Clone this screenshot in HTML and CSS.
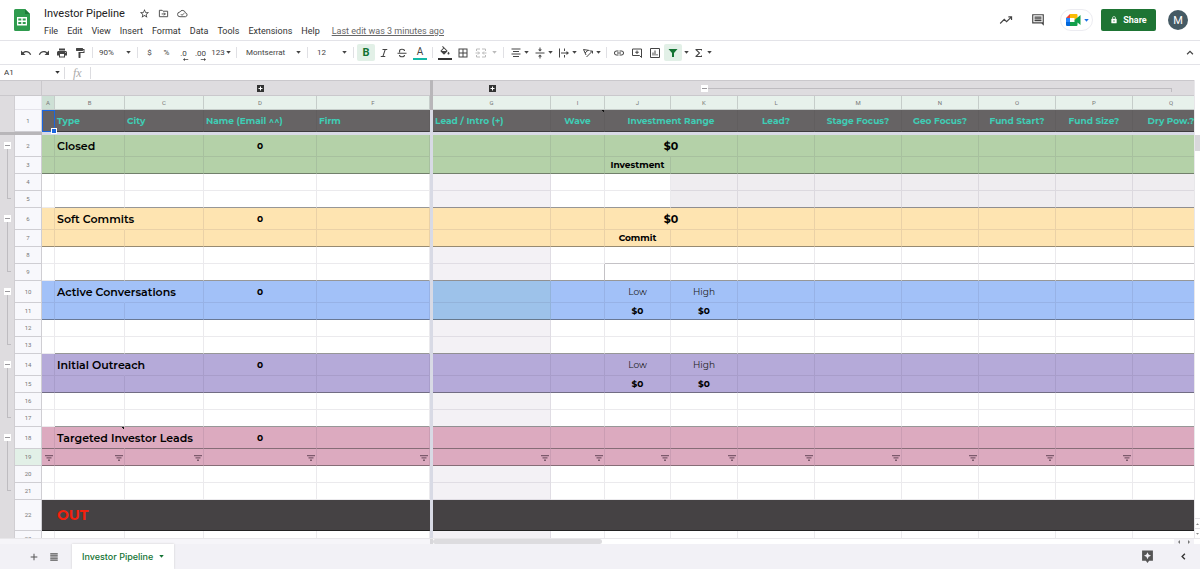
FILE: index.html
```
<!DOCTYPE html>
<html lang="en">
<head>
  <meta charset="UTF-8" />
  <meta name="viewport" content="width=device-width, initial-scale=1.0"/>
  <title>Investor Pipeline</title>
  <link rel="stylesheet" href="styles.css">
</head>
<body>
  <!-- shared icons -->
  <svg class="symbols" aria-hidden="true">
    <symbol id="caret" viewBox="0 0 6 4"><path d="M0 0h6L3 3.5z"/></symbol>
    <symbol id="filter" viewBox="0 0 8 6"><path d="M0 0h8v1.3H0zM1.5 2.3h5v1.3h-5zM3 4.6h2V6H3z"/></symbol>
    <symbol id="plus" viewBox="0 0 7 7"><path d="M0 0h7v7H0z"/><path d="M3.5 1.5v4M1.5 3.5h4" stroke="#fff" stroke-width="1"/></symbol>
    <symbol id="minus" viewBox="0 0 7 7"><path d="M1 3.5h5" stroke="#9a989c" stroke-width="1"/></symbol>
  </svg>

  <header class="topbar">
    <svg class="logo" viewBox="0 0 16 22">
      <path d="M1.5 0H11l5 5v15.5a1.5 1.5 0 0 1-1.5 1.5h-13A1.5 1.5 0 0 1 0 20.500V1.500A1.500 1.500 0 0 1 1.500 0z" fill="#2f9b4e"/>
      <path d="M11 0l5 5h-5z" fill="#1c7a38"/>
      <path d="M3 8h10v8.500H3z" fill="#fff"/>
      <path d="M4.300 9.500h3v2h-3zM8.700 9.500h3v2h-3zM4.300 13h3v2h-3zM8.700 13h3v2h-3z" fill="#2f9b4e"/>
    </svg>
    <div class="doc">
      <div class="title-row">
        <input class="doc-title" type="text" value="Investor Pipeline" aria-label="Document title">
        <button class="mini" aria-label="Star"><svg viewBox="0 0 24 24"><path d="M22 9.240l-7.190-.620L12 2 9.190 8.630 2 9.240l5.460 4.730L5.820 21 12 17.270 18.180 21l-1.630-7.030L22 9.240zM12 15.400l-3.760 2.270 1-4.280-3.320-2.880 4.380-.380L12 6.100l1.710 4.040 4.380.380-3.320 2.880 1 4.280L12 15.400z"/></svg></button>
        <button class="mini" aria-label="Move"><svg viewBox="0 0 24 24" fill="none" stroke="currentColor" stroke-width="2"><path d="M3 5h6l2 2h10v12H3zM8 13h8M13 10l3 3-3 3" /></svg></button>
        <button class="mini" aria-label="Saved to Drive"><svg viewBox="0 0 24 24" fill="none" stroke="currentColor" stroke-width="2"><path d="M6.500 19a5 5 0 0 1-.500-10 6.500 6.500 0 0 1 12.300 1.700A4.200 4.200 0 0 1 18.500 19zM8.500 13.500l2.500 2.500 4.500-4.500"/></svg></button>
      </div>
      <nav class="menu">
        <button>File</button>
        <button>Edit</button>
        <button>View</button>
        <button>Insert</button>
        <button>Format</button>
        <button>Data</button>
        <button>Tools</button>
        <button>Extensions</button>
        <button>Help</button>
        <a class="last-edit" href="#">Last edit was 3 minutes ago</a>
      </nav>
    </div>
    <div class="actions">
      <button class="action" aria-label="Activity"><svg viewBox="0 0 24 24" fill="none" stroke="currentColor" stroke-width="2"><path d="M2 18l7-7 4 4 8-8M16 6.500h5.500V12"/></svg></button>
      <button class="action" aria-label="Comments"><svg viewBox="0 0 24 24"><path d="M2 2h20v20l-4-4H2zm2 2v12h16V4zm2 2h12v2H6zm0 3h12v2H6zm0 3h12v2H6z" fill-rule="evenodd"/></svg></button>
      <button class="meet" aria-label="Meet">
        <svg class="meet-logo" viewBox="0 0 15 12">
          <path d="M0 4l4-4v4z" fill="#ea4335"/>
          <path d="M4 0h6.500a1 1 0 0 1 1 1v4L8.500 6.500V4H4z" fill="#fbbc04"/>
          <path d="M0 4h4v4H0z" fill="#2684fc"/>
          <path d="M0 8h4v4H1a1 1 0 0 1-1-1z" fill="#0066da"/>
          <path d="M4 8h4.500V6l6-5v10l-3-2.500V11a1 1 0 0 1-1 1H4z" fill="#12a04b"/>
        </svg>
        <svg class="caret"><use href="#caret"/></svg>
      </button>
      <button class="share">
        <svg viewBox="0 0 24 24"><path d="M18 8h-1V6c0-2.760-2.240-5-5-5S7 3.240 7 6v2H6c-1.100 0-2 .900-2 2v10c0 1.100.900 2 2 2h12c1.100 0 2-.900 2-2V10c0-1.100-.900-2-2-2zm-6 9c-1.100 0-2-.900-2-2s.900-2 2-2 2 .900 2 2-.900 2-2 2zm3.100-9H8.900V6c0-1.710 1.390-3.100 3.100-3.100 1.710 0 3.100 1.390 3.100 3.100v2z"/></svg>
        Share
      </button>
      <button class="avatar">M</button>
    </div>
  </header>

  <div class="toolbar">
    <button class="tool" aria-label="Undo"><svg viewBox="0 0 24 24"><path d="M12.500 8c-2.650 0-5.050.990-6.900 2.600L2 7v9h9l-3.620-3.620c1.390-1.160 3.160-1.880 5.120-1.880 3.540 0 6.550 2.310 7.600 5.500l2.370-.780C21.080 11.030 17.150 8 12.500 8z"/></svg></button>
    <button class="tool" aria-label="Redo"><svg viewBox="0 0 24 24"><path d="M18.400 10.600C16.550 8.990 14.150 8 11.500 8c-4.650 0-8.580 3.030-9.960 7.220L3.900 16c1.050-3.190 4.050-5.500 7.600-5.500 1.950 0 3.730.720 5.120 1.880L13 16h9V7l-3.600 3.600z"/></svg></button>
    <button class="tool" aria-label="Print"><svg viewBox="0 0 24 24"><path d="M19 8H5c-1.660 0-3 1.340-3 3v6h4v4h12v-4h4v-6c0-1.660-1.340-3-3-3zm-3 11H8v-5h8v5zm3-7c-.550 0-1-.450-1-1s.450-1 1-1 1 .450 1 1-.450 1-1 1zm-1-9H6v4h12V3z"/></svg></button>
    <button class="tool" aria-label="Paint format"><svg viewBox="0 0 24 24"><path d="M18 4V3c0-.550-.450-1-1-1H5c-.550 0-1 .450-1 1v4c0 .550.450 1 1 1h12c.550 0 1-.450 1-1V6h1v4H9v11c0 .550.450 1 1 1h2c.550 0 1-.450 1-1v-9h8V4h-3z"/></svg></button>
    <span class="sep"></span>
    <label class="drop zoom"><select aria-label="Zoom"><option>90%</option></select><svg class="caret"><use href="#caret"/></svg></label>
    <span class="sep"></span>
    <button class="tool num">$</button>
    <button class="tool num">%</button>
    <button class="tool num decimals">.0<svg viewBox="0 0 8 4"><path d="M0 2l2.500-2v1.500H7v1H2.500V4z"/></svg></button>
    <button class="tool num decimals">.00<svg viewBox="0 0 8 4"><path d="M8 2L5.500 0v1.500H1v1h4.500V4z"/></svg></button>
    <button class="tool formats">123<svg class="caret"><use href="#caret"/></svg></button>
    <span class="sep"></span>
    <label class="drop font"><select aria-label="Font"><option>Montserrat</option></select><svg class="caret"><use href="#caret"/></svg></label>
    <span class="sep"></span>
    <label class="drop size"><select aria-label="Font size"><option>12</option></select><svg class="caret"><use href="#caret"/></svg></label>
    <span class="sep"></span>
    <button class="tool bold on">B</button>
    <button class="tool" aria-label="Italic"><svg viewBox="0 0 24 24"><path d="M9 4v2.200h4l-4 11.600H5.500V20h9v-2.200h-3.300l4-11.600h3.300V4z"/></svg></button>
    <button class="tool" aria-label="Strikethrough"><svg viewBox="0 0 24 24" fill="none" stroke="currentColor" stroke-width="2.200"><path d="M3 12.500h18M17 8c0-2-2-3.500-5-3.500S7 6 7 8.300c0 1 .500 1.800 1.200 2.300M7 16c0 2 2 3.500 5 3.500s5-1.500 5-3.500"/></svg></button>
    <button class="tool text-color">A</button>
    <span class="sep"></span>
    <button class="tool fill" aria-label="Fill color"><svg viewBox="0 0 24 24"><path d="M16.560 8.940L7.620 0 6.210 1.410l2.380 2.380-5.150 5.150c-.590.590-.590 1.540 0 2.120l5.500 5.500c.290.290.680.440 1.060.440s.770-.150 1.060-.440l5.500-5.500c.590-.580.590-1.530 0-2.120zM5.210 10L10 5.210 14.790 10H5.210zM19 11.500s-2 2.170-2 3.500c0 1.100.900 2 2 2s2-.900 2-2c0-1.330-2-3.500-2-3.500z"/></svg></button>
    <button class="tool" aria-label="Borders"><svg viewBox="0 0 24 24"><path d="M3 3v18h18V3H3zm8 16H5v-6h6v6zm0-8H5V5h6v6zm8 8h-6v-6h6v6zm0-8h-6V5h6v6z"/></svg></button>
    <button class="tool merge" disabled aria-label="Merge cells"><svg viewBox="0 0 24 24" fill="none" stroke="currentColor" stroke-width="2"><path d="M3 8V4h7M14 4h7v4M3 16v4h7M14 20h7v-4M1 12h8M6 9l3 3-3 3M23 12h-8M18 9l-3 3 3 3"/></svg><svg class="caret"><use href="#caret"/></svg></button>
    <span class="sep"></span>
    <button class="tool pick" aria-label="Horizontal align"><svg viewBox="0 0 24 24"><path d="M3 3h18v2H3zM6 8h12v2H6zM3 13h18v2H3zM6 18h12v2H6z"/></svg><svg class="caret"><use href="#caret"/></svg></button>
    <button class="tool pick" aria-label="Vertical align"><svg viewBox="0 0 24 24"><path d="M3 11h18v2H3zM11 1h2v4h3l-4 4-4-4h3zM11 23h2v-4h3l-4-4-4 4h3z"/></svg><svg class="caret"><use href="#caret"/></svg></button>
    <button class="tool pick" aria-label="Text wrapping"><svg viewBox="0 0 24 24"><path d="M2 3h2v18H2zM12 3h2v5h-2zM12 16h2v5h-2zM6 11h11V8l5 4-5 4v-3H6z"/></svg><svg class="caret"><use href="#caret"/></svg></button>
    <button class="tool pick" aria-label="Text rotation"><svg viewBox="0 0 24 24" fill="none" stroke="currentColor" stroke-width="2"><path d="M3 5l12 2M3 5l5 11M12 6.500L6 12M9 20L21 8M21 13V8h-5"/></svg><svg class="caret"><use href="#caret"/></svg></button>
    <span class="sep"></span>
    <button class="tool" aria-label="Insert link"><svg viewBox="0 0 24 24"><path d="M3.900 12c0-1.710 1.390-3.100 3.100-3.100h4V7H7c-2.760 0-5 2.240-5 5s2.240 5 5 5h4v-1.900H7c-1.710 0-3.100-1.390-3.100-3.100zM8 13h8v-2H8v2zm9-6h-4v1.900h4c1.710 0 3.100 1.390 3.100 3.100s-1.390 3.100-3.100 3.100h-4V17h4c2.760 0 5-2.240 5-5s-2.240-5-5-5z"/></svg></button>
    <button class="tool" aria-label="Insert comment"><svg viewBox="0 0 24 24" fill="none" stroke="currentColor" stroke-width="2"><path d="M3 4h18v17l-4-4H3zM12 7v7M8.500 10.500h7"/></svg></button>
    <button class="tool" aria-label="Insert chart"><svg viewBox="0 0 24 24" fill="none" stroke="currentColor" stroke-width="2"><path d="M3 3h18v18H3zM8 17v-6M12 17V7M16 17v-3"/></svg></button>
    <button class="tool on" aria-label="Filter"><svg viewBox="0 0 24 24"><path d="M3 4h18l-7 8v8h-4v-8z"/></svg></button>
    <button class="tool more" aria-label="Filter views"><svg class="caret"><use href="#caret"/></svg></button>
    <button class="tool pick" aria-label="Functions"><svg viewBox="0 0 24 24"><path d="M18 4H5v2l6.500 6L5 18v2h13v-3h-2v1H8.500l6-6-6-6H16v1h2z"/></svg><svg class="caret"><use href="#caret"/></svg></button>
    <button class="tool collapse" aria-label="Hide the menus"><svg viewBox="0 0 24 24" fill="none" stroke="currentColor" stroke-width="3"><path d="M5 15l7-7 7 7"/></svg></button>
  </div>

  <div class="formula-bar">
    <input class="name-box" type="text" value="A1" aria-label="Name box">
    <svg class="caret"><use href="#caret"/></svg>
    <label class="fx" for="formula">fx</label>
    <input class="formula" id="formula" type="text">
  </div>

  <main class="sheet">
    <div class="grid-area">
      <table class="grid">
        <colgroup>
          <col class="w-gutter"><col class="w-head"><col class="w-a"><col class="w-b"><col class="w-c"><col class="w-d"><col class="w-d">
          <col class="w-freeze"><col class="w-g"><col class="w-i"><col class="w-j"><col class="w-k"><col class="w-l"><col class="w-m"><col class="w-l"><col class="w-l"><col class="w-l"><col>
        </colgroup>
        <thead>
          <tr class="groups">
            <td colspan="2" class="corner"></td>
            <td colspan="3"></td>
            <td><button class="toggle plus" aria-label="Expand column E"><svg><use href="#plus"/></svg></button></td>
            <td></td>
            <td class="bar"></td>
            <td><button class="toggle plus" aria-label="Expand column H"><svg><use href="#plus"/></svg></button></td>
            <td colspan="2"></td>
            <td colspan="7"><div class="bracket-x"><button class="toggle" aria-label="Collapse columns L to Q"><svg><use href="#minus"/></svg></button><i></i></div></td>
          </tr>
          <tr class="letters">
            <td class="gutter"></td><td class="blank"></td>
            <th scope="col" class="active">A</th><th scope="col">B</th><th scope="col">C</th><th scope="col">D</th><th scope="col">F</th><td class="bar"></td>
            <th scope="col">G</th><th scope="col">I</th><th scope="col">J</th><th scope="col">K</th><th scope="col">L</th><th scope="col">M</th><th scope="col">N</th><th scope="col">O</th><th scope="col">P</th><th scope="col">Q</th>
          </tr>
        </thead>
        <tbody>
          <tr class="titles">
            <td class="gutter"></td><th scope="row">1</th>
            <td class="cursor"></td><td>Type</td><td>City</td><td>Name (Email ^^)</td><td>Firm</td><td class="freeze" rowspan="24"></td>
            <td>Lead / Intro (+)</td><td class="mid note">Wave</td><td class="mid" colspan="2">Investment Range</td><td class="mid">Lead?</td><td class="mid">Stage Focus?</td><td class="mid">Geo Focus?</td><td class="mid">Fund Start?</td><td class="mid">Fund Size?</td><td class="mid">Dry Pow.?</td>
          </tr>
          <tr class="freeze-row"><td colspan="2" class="dark"></td><td colspan="5"></td><td colspan="10"></td></tr>

          <tr class="head green">
            <td class="gutter" rowspan="4"><div class="bracket"><button class="toggle" aria-label="Collapse rows 3 to 5"><svg><use href="#minus"/></svg></button><i></i></div></td>
            <th scope="row">2</th><td></td><td class="name">Closed</td><td></td><td class="mid">0</td><td></td><td></td><td></td><td class="mid total" colspan="2">$0</td><td></td><td></td><td></td><td></td><td></td><td></td>
          </tr>
          <tr class="green end"><th scope="row">3</th><td></td><td></td><td></td><td></td><td></td><td></td><td></td><td class="mid">Investment</td><td></td><td></td><td></td><td></td><td></td><td></td><td></td></tr>
          <tr class="locked"><th scope="row">4</th><td></td><td></td><td></td><td></td><td></td><td></td><td></td><td class="j"></td><td></td><td></td><td></td><td></td><td></td><td></td><td></td></tr>
          <tr class="locked end"><th scope="row">5</th><td class="plain"></td><td></td><td></td><td></td><td></td><td></td><td></td><td class="j"></td><td></td><td></td><td></td><td></td><td></td><td></td><td></td></tr>

          <tr class="head yellow">
            <td class="gutter" rowspan="4"><div class="bracket"><button class="toggle" aria-label="Collapse rows 7 to 9"><svg><use href="#minus"/></svg></button><i></i></div></td>
            <th scope="row">6</th><td></td><td class="name spill">Soft Commits</td><td></td><td class="mid">0</td><td></td><td></td><td></td><td class="mid total" colspan="2">$0</td><td></td><td></td><td></td><td></td><td></td><td></td>
          </tr>
          <tr class="yellow end"><th scope="row">7</th><td></td><td></td><td></td><td></td><td></td><td></td><td></td><td class="mid">Commit</td><td></td><td></td><td></td><td></td><td></td><td></td><td></td></tr>
          <tr class="ruled"><th scope="row">8</th><td></td><td></td><td></td><td></td><td></td><td></td><td class="i"></td><td></td><td></td><td></td><td></td><td></td><td></td><td></td><td></td></tr>
          <tr class="end"><th scope="row">9</th><td class="plain"></td><td></td><td></td><td></td><td></td><td></td><td class="edge"></td><td></td><td></td><td></td><td></td><td></td><td></td><td></td><td></td></tr>

          <tr class="head blue">
            <td class="gutter" rowspan="4"><div class="bracket"><button class="toggle" aria-label="Collapse rows 11 to 13"><svg><use href="#minus"/></svg></button><i></i></div></td>
            <th scope="row">10</th><td></td><td class="name spill">Active Conversations</td><td></td><td class="mid">0</td><td></td><td class="tint"></td><td></td><td class="mid light">Low</td><td class="mid light">High</td><td></td><td></td><td></td><td></td><td></td><td></td>
          </tr>
          <tr class="blue end"><th scope="row">11</th><td></td><td></td><td></td><td></td><td></td><td class="tint"></td><td></td><td class="mid">$0</td><td class="mid">$0</td><td></td><td></td><td></td><td></td><td></td><td></td></tr>
          <tr><th scope="row">12</th><td></td><td></td><td></td><td></td><td></td><td></td><td></td><td></td><td></td><td></td><td></td><td></td><td></td><td></td><td></td></tr>
          <tr class="end"><th scope="row">13</th><td class="plain"></td><td></td><td></td><td></td><td></td><td></td><td></td><td></td><td></td><td></td><td></td><td></td><td></td><td></td><td></td></tr>

          <tr class="head purple">
            <td class="gutter" rowspan="4"><div class="bracket"><button class="toggle" aria-label="Collapse rows 15 to 17"><svg><use href="#minus"/></svg></button><i></i></div></td>
            <th scope="row">14</th><td></td><td class="name spill">Initial Outreach</td><td></td><td class="mid">0</td><td></td><td></td><td></td><td class="mid light">Low</td><td class="mid light">High</td><td></td><td></td><td></td><td></td><td></td><td></td>
          </tr>
          <tr class="purple end"><th scope="row">15</th><td></td><td></td><td></td><td></td><td></td><td></td><td></td><td class="mid">$0</td><td class="mid">$0</td><td></td><td></td><td></td><td></td><td></td><td></td></tr>
          <tr><th scope="row">16</th><td></td><td></td><td></td><td></td><td></td><td></td><td></td><td></td><td></td><td></td><td></td><td></td><td></td><td></td><td></td></tr>
          <tr class="end"><th scope="row">17</th><td class="plain"></td><td></td><td></td><td></td><td></td><td></td><td></td><td></td><td></td><td></td><td></td><td></td><td></td><td></td><td></td></tr>

          <tr class="head pink end">
            <td class="gutter" rowspan="4"><div class="bracket"><button class="toggle" aria-label="Collapse rows 19 to 21"><svg><use href="#minus"/></svg></button><i></i></div></td>
            <th scope="row">18</th><td></td><td class="name spill note">Targeted Investor Leads</td><td></td><td class="mid">0</td><td></td><td></td><td></td><td></td><td></td><td></td><td></td><td></td><td></td><td></td><td></td>
          </tr>
          <tr class="pink end filters">
            <th scope="row" class="active">19</th>
            <td><svg><use href="#filter"/></svg></td><td><svg><use href="#filter"/></svg></td><td><svg><use href="#filter"/></svg></td><td><svg><use href="#filter"/></svg></td><td><svg><use href="#filter"/></svg></td>
            <td><svg><use href="#filter"/></svg></td><td><svg><use href="#filter"/></svg></td><td><svg><use href="#filter"/></svg></td><td><svg><use href="#filter"/></svg></td><td><svg><use href="#filter"/></svg></td><td><svg><use href="#filter"/></svg></td><td><svg><use href="#filter"/></svg></td><td><svg><use href="#filter"/></svg></td><td><svg><use href="#filter"/></svg></td><td></td>
          </tr>
          <tr><th scope="row">20</th><td></td><td></td><td></td><td></td><td></td><td></td><td></td><td></td><td></td><td></td><td></td><td></td><td></td><td></td><td></td></tr>
          <tr><th scope="row">21</th><td></td><td></td><td></td><td></td><td></td><td></td><td></td><td></td><td></td><td></td><td></td><td></td><td></td><td></td><td></td></tr>

          <tr class="out"><td class="gutter"></td><th scope="row">22</th><td></td><td colspan="4">OUT</td><td colspan="10"></td></tr>
          <tr><td class="gutter"></td><th scope="row">23</th><td></td><td></td><td></td><td></td><td></td><td></td><td></td><td></td><td></td><td></td><td></td><td></td><td></td><td></td><td></td></tr>
        </tbody>
      </table>
    </div>
    <div class="scroll-y">
      <span class="thumb"></span>
      <button aria-label="Scroll up"><svg class="up"><use href="#caret"/></svg></button>
      <button aria-label="Scroll down"><svg><use href="#caret"/></svg></button>
    </div>
  </main>
  <div class="scroll-x">
    <span class="frozen"></span>
    <span class="thumb"></span>
    <button aria-label="Scroll left"><svg viewBox="0 0 4 4"><path d="M3 0v4L1 2z"/></svg></button>
    <button aria-label="Scroll right"><svg viewBox="0 0 4 4"><path d="M1 0v4l2-2z"/></svg></button>
  </div>

  <footer class="tabs">
    <button class="tab-tool" aria-label="Add sheet"><svg viewBox="0 0 24 24"><path d="M20 13.200h-6.800V20h-2.400v-6.800H4v-2.400h6.800V4h2.400v6.800H20z"/></svg></button>
    <button class="tab-tool" aria-label="All sheets"><svg viewBox="0 0 24 24"><path d="M3 3h18v3H3zM3 8h18v3H3zM3 13h18v3H3zM3 18h18v3H3z"/></svg></button>
    <button class="tab">Investor Pipeline<svg class="caret"><use href="#caret"/></svg></button>
    <button class="explore" aria-label="Explore"><svg viewBox="0 0 24 24"><path d="M2 1h20v19h-7l-3 4-3-4H2zM12 4l-2 4.500L5.500 10.500 10 12.500l2 4.500 2-4.500 4.500-2L14 8.500z" fill-rule="evenodd"/></svg></button>
    <button class="side" aria-label="Show side panel"><svg viewBox="0 0 24 24" fill="none" stroke="currentColor" stroke-width="3"><path d="M15 6l-6 6 6 6"/></svg></button>
  </footer>
</body>
</html>
```

FILE: styles.css
```
* {
  box-sizing: border-box;
}

body {
  display: flex;
  flex-direction: column;
  height: 100vh;
  margin: 0;
  overflow: hidden;
  background: #fff;
  color: #333;
  font-family: Roboto, Arial, sans-serif;
  font-size: 8px;
}

button,
input,
select {
  margin: 0;
  padding: 0;
  border: none;
  background: none;
  color: inherit;
  font: inherit;
  outline: none;
}

button {
  cursor: pointer;
}

svg {
  display: block;
  flex: none;
  fill: currentColor;
}

svg[fill="none"] {
  fill: none;
}

.symbols {
  position: absolute;
  width: 0;
  height: 0;
}

.caret {
  width: 5px;
  height: 3px;
}

/* title and menus */
.topbar {
  display: flex;
  align-items: center;
  height: 40px;
  padding: 0 12px 0 14px;
}

.logo {
  width: 16px;
  height: 22px;
}

.doc {
  margin-left: 14px;
}

.title-row {
  display: flex;
  align-items: center;
  height: 18px;
  margin-top: 3px;
}

.doc-title {
  width: 93px;
  color: #222;
  font-size: 11px;
}

.mini {
  width: 19px;
  color: #444;
}

.mini svg {
  width: 11px;
  height: 11px;
  margin-left: 2px;
}

.menu {
  display: flex;
  align-items: center;
  gap: 9px;
  height: 16px;
  font-size: 9px;
}

.last-edit {
  margin-left: 3px;
  color: #666;
}

.actions {
  display: flex;
  align-items: center;
  margin-left: auto;
}

.action {
  width: 14px;
  margin-right: 18px;
  color: #444;
}

.action svg {
  width: 14px;
  height: 14px;
}

.action + .action {
  margin-right: 15px;
}

.meet {
  display: flex;
  align-items: center;
  gap: 3px;
  width: 33px;
  height: 22px;
  margin-right: 8px;
  padding-left: 5px;
  border: 1px solid #ececf1;
  border-radius: 11px;
  color: #1a73e8;
}

.meet-logo {
  width: 15px;
  height: 12px;
}

.share {
  display: flex;
  align-items: center;
  justify-content: center;
  gap: 5px;
  width: 55px;
  height: 22px;
  border-radius: 2px;
  background: #1e7434;
  color: #fff;
  font-size: 9px;
  font-weight: 700;
}

.share svg {
  width: 8px;
  height: 8px;
}

.avatar {
  width: 20px;
  height: 20px;
  margin-left: 12px;
  border-radius: 50%;
  background: #455a64;
  color: #fff;
  font-size: 11px;
}

/* toolbar */
.toolbar {
  display: flex;
  align-items: center;
  height: 24px;
  padding: 0 4px 0 17px;
  border-top: 1px solid #e3e3e8;
  color: #444;
}

.tool {
  display: flex;
  align-items: center;
  justify-content: center;
  width: 18px;
  height: 17px;
}

.tool svg:not(.caret) {
  width: 12px;
  height: 12px;
}

.sep {
  width: 1px;
  height: 11px;
  margin: 0 3px;
  background: #e0e0e4;
}

.drop {
  display: flex;
  align-items: center;
  justify-content: space-between;
  padding: 0 3px;
}

.drop select {
  appearance: none;
}

.zoom {
  width: 38px;
}

.font {
  width: 64px;
  padding-left: 6px;
}

.size {
  width: 39px;
  padding-left: 6px;
}

.num {
  width: 17px;
}

.tool.decimals {
  flex-direction: column;
  padding-top: 4px;
}

.tool.decimals svg {
  width: 6px;
  height: 3px;
  margin-left: 5px;
}

.tool.formats {
  gap: 1px;
  width: 24px;
}

.on {
  border-radius: 2px;
  background: #e2f0e7;
  color: #137333;
}

.bold {
  font-size: 11px;
  font-weight: 700;
}

.text-color,
.fill {
  width: 14px;
  height: 15px;
  margin: 0 2px;
  border-bottom: 2px solid #12b8a6;
  font-size: 10px;
}

.fill {
  border-bottom-color: #333;
}

.merge {
  gap: 5px;
  width: 28px;
  color: #bbb;
}

.pick {
  gap: 2px;
  width: 24px;
}

.more {
  width: 8px;
}

.collapse {
  width: 12px;
  margin-left: auto;
}

.collapse svg:not(.caret) {
  width: 10px;
  height: 10px;
}

/* formula bar */
.formula-bar {
  display: flex;
  align-items: center;
  height: 16px;
  border-top: 1px solid #e3e3e8;
}

.name-box {
  width: 55px;
  padding-left: 4px;
}

.fx {
  margin-left: 4px;
  padding: 0 8px;
  border: solid #dcdce0;
  border-width: 0 1px;
  color: #aaa;
  font: italic 12px/12px "Liberation Serif", serif;
}

.formula {
  flex: 1;
}

/* sheet */
.sheet {
  display: flex;
  flex: 1;
  min-height: 0;
}

.grid-area {
  flex: 1;
  min-width: 0;
  overflow: hidden;
}

.grid {
  width: 100%;
  min-width: 1210px;
  border-spacing: 0;
  table-layout: fixed;
  font-family: Montserrat, Inter, sans-serif;
  font-size: 9px;
  font-weight: 700;
  color: #000;
}

.w-gutter { width: 15px; }
.w-head { width: 27px; }
.w-a { width: 13px; }
.w-b { width: 70px; }
.w-c { width: 79px; }
.w-d { width: 113px; }
.w-freeze { width: 3px; }
.w-g { width: 118px; background: #f3f1f5; }
.w-i { width: 54px; }
.w-j { width: 66px; }
.w-k { width: 67px; }
.w-l { width: 77px; }
.w-m { width: 87px; }

.grid tr {
  height: 17px;
}

.grid td,
.grid th {
  padding: 0 2px;
  border: solid rgba(60, 50, 80, 0.1);
  border-width: 0 1px 1px 0;
  line-height: 12px;
  text-align: left;
  white-space: nowrap;
}

.grid th {
  border-color: #cfced3;
  background: #f8f8fc;
  color: #777;
  font-family: Roboto, Arial, sans-serif;
  font-size: 6px;
  font-weight: 400;
  line-height: 8px;
  text-align: center;
}

.grid td.mid {
  text-align: center;
}

.grid td.gutter {
  padding: 0;
  border-width: 0 1px 0 0;
  border-color: #d0ced2;
  background: #dedcdf;
}

.grid .groups {
  height: 16px;
}

.grid .groups td {
  padding: 0;
  border-width: 1px 0;
  border-color: #cac8cc;
  background: #dedcdf;
}

.grid .groups .corner {
  border-right-width: 1px;
}

.grid .letters {
  height: 14px;
}

.grid .letters th {
  background: #e7f1eb;
  border-color: #c6cdca;
}

.grid .blank {
  background: #f8f8fc;
}

.grid .letters .active {
  background: #cde0d5;
}

.grid th.active {
  background: #e2f0e7;
}

.grid .bar,
.grid .groups .bar {
  padding: 0;
  border: none;
  background: #b8b6b9;
}

.toggle {
  display: block;
  width: 7px;
  height: 7px;
  margin: 0 auto;
  background: #fff;
  color: #333;
}

.toggle svg {
  width: 7px;
  height: 7px;
}

.bracket-x {
  display: flex;
  align-items: center;
  padding: 0 38px 0 30px;
}

.bracket-x .toggle,
.bracket .toggle {
  margin: 0;
  flex: none;
}

.bracket-x i {
  flex: 1;
  height: 4px;
  margin-top: 4px;
  border: solid #bebcc0;
  border-width: 1px 1px 0 0;
}

.bracket {
  display: flex;
  flex-direction: column;
  height: 73px;
  padding: 7px 0 9px 4px;
}

.bracket i {
  flex: 1;
  width: 4px;
  margin-left: 3px;
  border: solid #bebcc0;
  border-width: 0 0 1px 1px;
}

.grid .titles {
  height: 22px;
  background: #666364;
  color: #3fcdb5;
}

.grid .titles td:not(.gutter):not(.cursor) {
  border-color: #615e5f;
  border-bottom-color: #3d3b3d;
}

/* selected cell */
.grid .titles .cursor {
  position: relative;
  border: 1px solid #1a66e0;
}

.cursor::after {
  position: absolute;
  right: -3px;
  bottom: -3px;
  width: 4px;
  height: 4px;
  border: 1px solid #fff;
  background: #1a66e0;
  content: "";
  box-sizing: content-box;
}

.grid .freeze-row {
  height: 3px;
}

.grid .freeze-row td {
  padding: 0;
  border: none;
  background: #d8dae5;
  line-height: 0;
}

.grid .freeze-row .dark {
  background: #b8b6b9;
}

.grid td.freeze {
  padding: 0;
  border: none;
  background: #d8dae5;
}

.grid .head {
  height: 22px;
}

.grid .name,
.grid .total {
  font-size: 11px;
}

.grid .name {
  font-weight: 600;
}

/* title runs on into the next cell */
.grid .spill {
  border-right-color: transparent;
}

.grid .light {
  font-weight: 400;
  color: #222;
}

.green { background: #b4d1a8; }
.yellow { background: #fee4b1; }
.blue { background: #a2c1f8; }
.purple { background: #b5aad9; }
.pink { background: #dcaabf; }
.tint { background: #9dc2ea; }

/* dark rules round each section */
.grid .end td:not(.gutter):not(.plain) {
  border-bottom-color: rgba(50, 50, 50, 0.5);
}

.locked .j ~ td {
  background: #efedf0;
}

.grid .ruled .i ~ td {
  border-bottom-color: #c4c2c6;
}

.grid .edge {
  border-right-color: #c4c2c6;
}

/* corner mark of a cell with a note */
.note {
  background: linear-gradient(225deg, #111 2px, transparent 2px) no-repeat;
}

.filters td svg {
  width: 8px;
  height: 6px;
  margin: 1px 0 0 auto;
  color: #7c5a6c;
}

.grid .filters td {
  padding: 0 1px;
}

.grid .out {
  height: 31px;
  background: #454244;
}

.grid .out td:not(.gutter) {
  border-color: #454244;
  border-bottom-color: #222;
  color: #f4200d;
  font-size: 14px;
}

/* scrollbars */
.scroll-y {
  display: flex;
  flex-direction: column;
  width: 6px;
  padding-top: 55px;
  border-left: 1px solid #e8e7ea;
  color: #888;
}

.scroll-y .thumb {
  height: 16px;
  margin-bottom: auto;
  background: #d9d8dc;
}

.scroll-y button {
  height: 10px;
  border-top: 1px solid #e3e2e6;
}

.scroll-y svg {
  width: 3px;
  height: 2px;
  margin: auto;
}

.scroll-y .up {
  transform: rotate(180deg);
}

.scroll-x {
  display: flex;
  height: 6px;
  padding-right: 6px;
  border-top: 1px solid #e8e7ea;
  color: #777;
}

.scroll-x .frozen {
  width: 433px;
  border-right: 3px solid #d8d7db;
  background: #f6f5f9;
}

.scroll-x .thumb {
  width: 169px;
  margin-right: auto;
  border-radius: 3px;
  background: #dddcdf;
}

.scroll-x button {
  width: 10px;
  background: #f3f2f6;
}

.scroll-x svg {
  width: 4px;
  height: 4px;
  margin: auto;
}

/* sheet tabs */
.tabs {
  display: flex;
  align-items: center;
  height: 25px;
  padding: 0 11px 0 24px;
  background: #f2f1f6;
  color: #555;
}

.tab-tool {
  width: 20px;
}

.tab-tool svg {
  width: 10px;
  height: 10px;
  margin: 0 auto;
}

.tab {
  display: flex;
  align-items: center;
  gap: 6px;
  height: 25px;
  margin-left: 8px;
  padding: 0 10px;
  background: #fff;
  box-shadow: 0 0 2px #ccc;
  color: #137333;
  font-family: Inter, Roboto, sans-serif;
  font-size: 9px;
  font-weight: 500;
}

.explore {
  margin-left: auto;
}

.explore svg {
  width: 13px;
  height: 13px;
}

.side {
  margin-left: 24px;
  color: #333;
}

.side svg {
  width: 11px;
  height: 11px;
}
```
